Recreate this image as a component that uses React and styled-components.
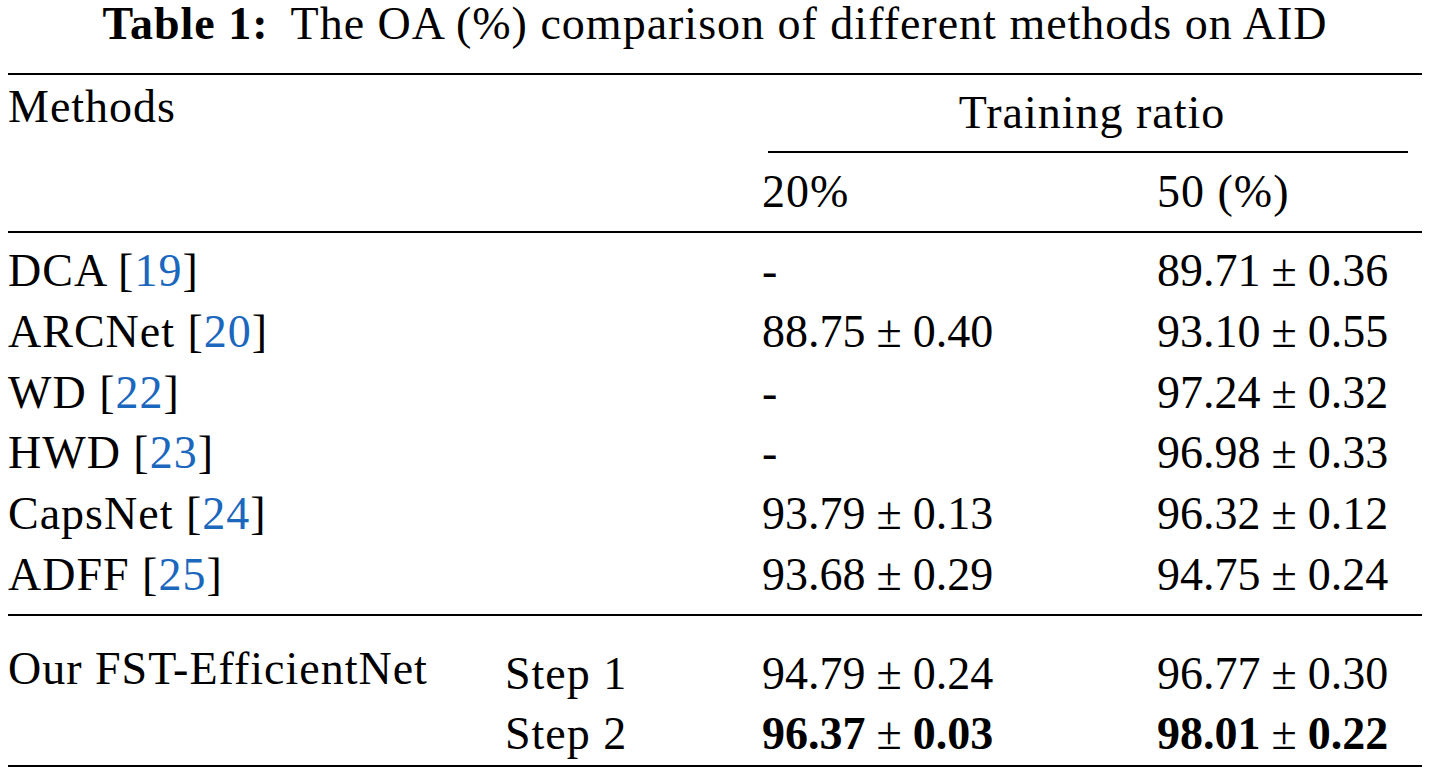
import React from 'react'
import styled, { createGlobalStyle } from 'styled-components'

const GlobalStyle = createGlobalStyle`
  html, body {
    margin: 0;
    padding: 0;
    background: #ffffff;
  }
  body {
    font-family: 'Liberation Serif', 'Times New Roman', serif;
    color: #000000;
  }
`

const Page = styled.div`
  width: 1414px;
  padding: 2px 7px 0 8px;
  font-size: 46px;
  letter-spacing: 1px;
  font-variant-ligatures: none;
`

const Caption = styled.div`
  text-align: center;
  line-height: 43px;
  white-space: nowrap;
`

const CaptionLabel = styled.b`
  margin-right: 22px;
`

const Rule = styled.div`
  height: ${props => props.$thick || 2}px;
  background: #000;
  margin-top: ${props => props.$top || 0}px;
  margin-left: ${props => props.$left || 0}px;
  margin-right: ${props => props.$right || 0}px;
`

const Grid = styled.div`
  display: grid;
  grid-template-columns: 497px 257px 395px 265px;
  padding-top: ${props => props.$padTop || 0}px;
  padding-bottom: ${props => props.$padBottom || 0}px;
`

const Cell = styled.div`
  line-height: ${props => props.$lh || 61}px;
  white-space: nowrap;
  grid-column: ${props => props.$col || 'auto'};
  grid-row: ${props => props.$row || 'auto'};
  padding-top: ${props => props.$padTop || 0}px;
  margin-top: ${props => props.$shift || 0}px;
  text-align: ${props => (props.$center ? 'center' : 'left')};
  letter-spacing: ${props => (props.$num ? '0' : 'inherit')};
  align-self: start;
`

const Ref = styled.span`
  color: #1a67bd;
`

const Strong = styled.span`
  font-weight: bold;
`

const Pm = styled.span`
  margin: 0 11px;
  font-weight: normal;
`

const rows = [
  { name: 'DCA', ref: 19, a: null, b: ['89.71', '0.36'] },
  { name: 'ARCNet', ref: 20, a: ['88.75', '0.40'], b: ['93.10', '0.55'] },
  { name: 'WD', ref: 22, a: null, b: ['97.24', '0.32'] },
  { name: 'HWD', ref: 23, a: null, b: ['96.98', '0.33'] },
  { name: 'CapsNet', ref: 24, a: ['93.79', '0.13'], b: ['96.32', '0.12'] },
  { name: 'ADFF', ref: 25, a: ['93.68', '0.29'], b: ['94.75', '0.24'] },
]

function Value({ v, bold }) {
  if (!v) return '-'
  if (bold) {
    return (
      <>
        <Strong>{v[0]}</Strong>
        <Pm>±</Pm>
        <Strong>{v[1]}</Strong>
      </>
    )
  }
  return (
    <>
      {v[0]}
      <Pm>±</Pm>
      {v[1]}
    </>
  )
}

export default function App() {
  return (
    <Page>
      <GlobalStyle />
      <Caption>
        <CaptionLabel>Table 1:</CaptionLabel>The OA (%) comparison of different
        methods on AID
      </Caption>

      <Rule $top={28} />

      <Grid $padBottom={9}>
        <Cell $col="1 / 3" $row="1" $padTop={1}>
          Methods
        </Cell>
        <Cell $col="3 / 5" $row="1" $padTop={7} $center>
          Training ratio
          <Rule $top={8} $left={6} $right={14} />
        </Cell>
        <Cell $col="3" $row="2" $padTop={8}>
          20%
        </Cell>
        <Cell $col="4" $row="2" $padTop={8}>
          50 (%)
        </Cell>
      </Grid>

      <Rule />

      <Grid $padTop={8} $padBottom={8}>
        {rows.map(r => (
          <React.Fragment key={r.name}>
            <Cell $col="1 / 3" $lh={60.8}>
              {r.name} [<Ref>{r.ref}</Ref>]
            </Cell>
            <Cell $col="3" $lh={60.8} $num>
              <Value v={r.a} />
            </Cell>
            <Cell $col="4" $lh={60.8} $num>
              <Value v={r.b} />
            </Cell>
          </React.Fragment>
        ))}
      </Grid>

      <Rule />

      <Grid $padTop={28} $padBottom={1}>
        <Cell $col="1" $row="1 / 3" $lh={60} $shift={-5}>
          Our FST-EfficientNet
        </Cell>
        <Cell $col="2" $row="1" $lh={60}>
          Step 1
        </Cell>
        <Cell $col="3" $row="1" $lh={60} $num>
          <Value v={['94.79', '0.24']} />
        </Cell>
        <Cell $col="4" $row="1" $lh={60} $num>
          <Value v={['96.77', '0.30']} />
        </Cell>
        <Cell $col="2" $row="2" $lh={60}>
          Step 2
        </Cell>
        <Cell $col="3" $row="2" $lh={60} $num>
          <Value v={['96.37', '0.03']} bold />
        </Cell>
        <Cell $col="4" $row="2" $lh={60} $num>
          <Value v={['98.01', '0.22']} bold />
        </Cell>
      </Grid>

      <Rule />
    </Page>
  )
}
